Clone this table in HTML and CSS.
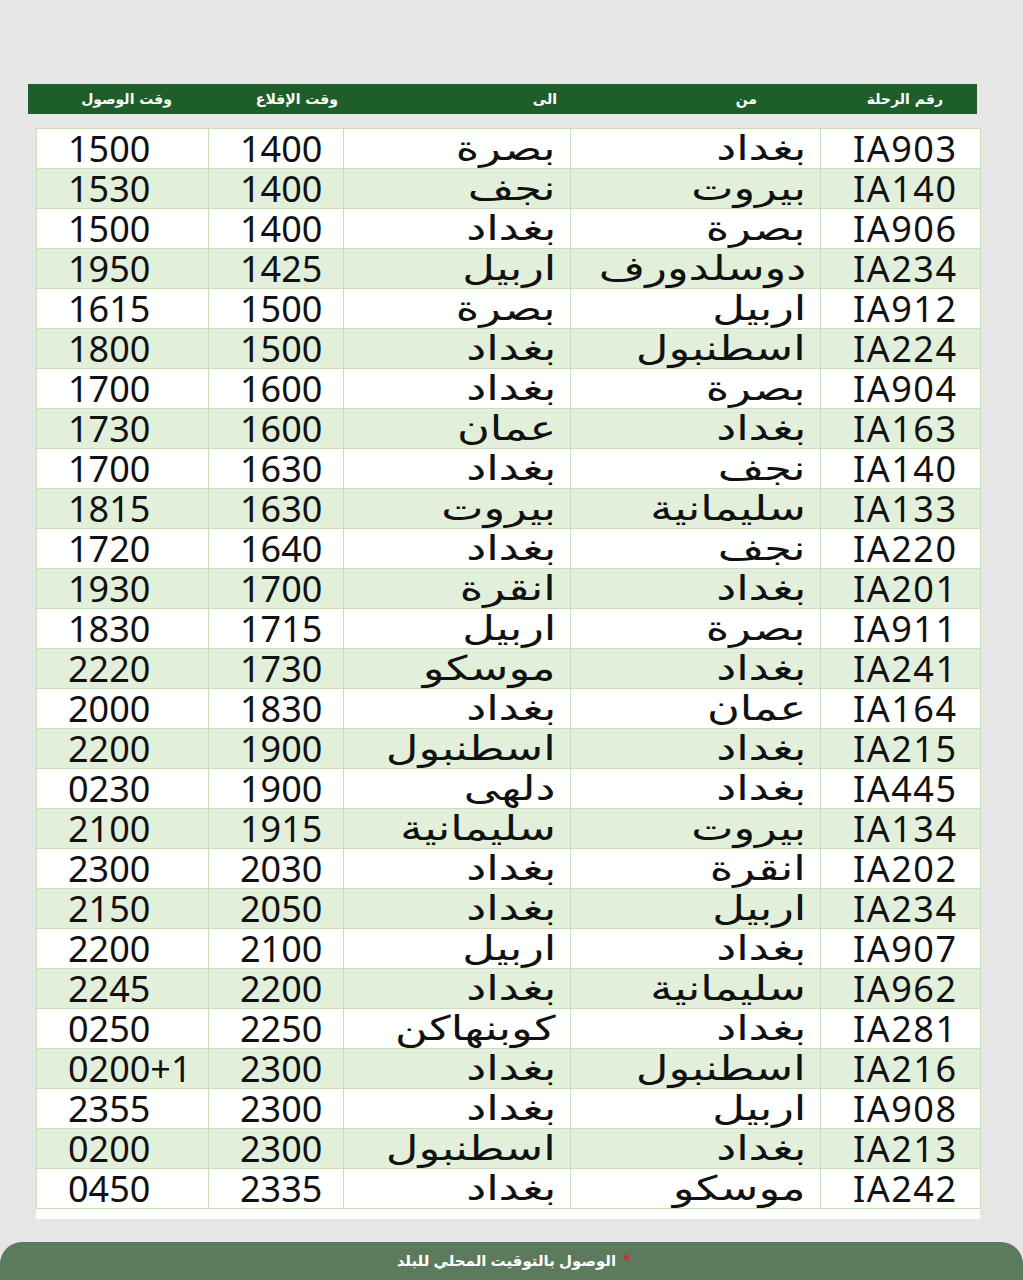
FILE: index.html
```html
<!DOCTYPE html>
<html lang="ar">
<head>
<meta charset="utf-8">
<link rel="stylesheet" href="styles.css">
</head>
<body>
<div class="page">
  <div class="head" dir="rtl">
    <span>رقم الرحلة</span>
    <span>من</span>
    <span>الى</span>
    <span>وقت الإقلاع</span>
    <span>وقت الوصول</span>
  </div>
  <div class="panel">
    <table class="sched" dir="rtl">
      <colgroup>
        <col class="c-fl"><col class="c-from"><col class="c-to"><col class="c-dep"><col class="c-arr">
      </colgroup>
      <tbody id="rows">
<tr><td class="fl">IA903</td><td class="city"><span>بغداد</span></td><td class="city"><span>بصرة</span></td><td class="tm">1400</td><td class="tm">1500</td></tr>
<tr><td class="fl">IA140</td><td class="city"><span>بيروت</span></td><td class="city"><span>نجف</span></td><td class="tm">1400</td><td class="tm">1530</td></tr>
<tr><td class="fl">IA906</td><td class="city"><span>بصرة</span></td><td class="city"><span>بغداد</span></td><td class="tm">1400</td><td class="tm">1500</td></tr>
<tr><td class="fl">IA234</td><td class="city"><span>دوسلدورف</span></td><td class="city"><span>اربيل</span></td><td class="tm">1425</td><td class="tm">1950</td></tr>
<tr><td class="fl">IA912</td><td class="city"><span>اربيل</span></td><td class="city"><span>بصرة</span></td><td class="tm">1500</td><td class="tm">1615</td></tr>
<tr><td class="fl">IA224</td><td class="city"><span>اسطنبول</span></td><td class="city"><span>بغداد</span></td><td class="tm">1500</td><td class="tm">1800</td></tr>
<tr><td class="fl">IA904</td><td class="city"><span>بصرة</span></td><td class="city"><span>بغداد</span></td><td class="tm">1600</td><td class="tm">1700</td></tr>
<tr><td class="fl">IA163</td><td class="city"><span>بغداد</span></td><td class="city"><span>عمان</span></td><td class="tm">1600</td><td class="tm">1730</td></tr>
<tr><td class="fl">IA140</td><td class="city"><span>نجف</span></td><td class="city"><span>بغداد</span></td><td class="tm">1630</td><td class="tm">1700</td></tr>
<tr><td class="fl">IA133</td><td class="city"><span>سليمانية</span></td><td class="city"><span>بيروت</span></td><td class="tm">1630</td><td class="tm">1815</td></tr>
<tr><td class="fl">IA220</td><td class="city"><span>نجف</span></td><td class="city"><span>بغداد</span></td><td class="tm">1640</td><td class="tm">1720</td></tr>
<tr><td class="fl">IA201</td><td class="city"><span>بغداد</span></td><td class="city"><span>انقرة</span></td><td class="tm">1700</td><td class="tm">1930</td></tr>
<tr><td class="fl">IA911</td><td class="city"><span>بصرة</span></td><td class="city"><span>اربيل</span></td><td class="tm">1715</td><td class="tm">1830</td></tr>
<tr><td class="fl">IA241</td><td class="city"><span>بغداد</span></td><td class="city"><span>موسكو</span></td><td class="tm">1730</td><td class="tm">2220</td></tr>
<tr><td class="fl">IA164</td><td class="city"><span>عمان</span></td><td class="city"><span>بغداد</span></td><td class="tm">1830</td><td class="tm">2000</td></tr>
<tr><td class="fl">IA215</td><td class="city"><span>بغداد</span></td><td class="city"><span>اسطنبول</span></td><td class="tm">1900</td><td class="tm">2200</td></tr>
<tr><td class="fl">IA445</td><td class="city"><span>بغداد</span></td><td class="city"><span>دلهى</span></td><td class="tm">1900</td><td class="tm">0230</td></tr>
<tr><td class="fl">IA134</td><td class="city"><span>بيروت</span></td><td class="city"><span>سليمانية</span></td><td class="tm">1915</td><td class="tm">2100</td></tr>
<tr><td class="fl">IA202</td><td class="city"><span>انقرة</span></td><td class="city"><span>بغداد</span></td><td class="tm">2030</td><td class="tm">2300</td></tr>
<tr><td class="fl">IA234</td><td class="city"><span>اربيل</span></td><td class="city"><span>بغداد</span></td><td class="tm">2050</td><td class="tm">2150</td></tr>
<tr><td class="fl">IA907</td><td class="city"><span>بغداد</span></td><td class="city"><span>اربيل</span></td><td class="tm">2100</td><td class="tm">2200</td></tr>
<tr><td class="fl">IA962</td><td class="city"><span>سليمانية</span></td><td class="city"><span>بغداد</span></td><td class="tm">2200</td><td class="tm">2245</td></tr>
<tr><td class="fl">IA281</td><td class="city"><span>بغداد</span></td><td class="city"><span>كوبنهاكن</span></td><td class="tm">2250</td><td class="tm">0250</td></tr>
<tr><td class="fl">IA216</td><td class="city"><span>اسطنبول</span></td><td class="city"><span>بغداد</span></td><td class="tm">2300</td><td class="tm" dir="ltr">0200+1</td></tr>
<tr><td class="fl">IA908</td><td class="city"><span>اربيل</span></td><td class="city"><span>بغداد</span></td><td class="tm">2300</td><td class="tm">2355</td></tr>
<tr><td class="fl">IA213</td><td class="city"><span>بغداد</span></td><td class="city"><span>اسطنبول</span></td><td class="tm">2300</td><td class="tm">0200</td></tr>
<tr><td class="fl">IA242</td><td class="city"><span>موسكو</span></td><td class="city"><span>بغداد</span></td><td class="tm">2335</td><td class="tm">0450</td></tr>
      </tbody>
    </table>
  </div>
  <div class="foot" dir="rtl">
    <span class="star">*</span>
    <span class="note">الوصول بالتوقيت المحلي للبلد</span>
  </div>
</div>
</body>
</html>
```
FILE: styles.css
```css
html, body {
  margin: 0;
  padding: 0;
  background: #e6e6e6;
}
.page {
  width: 1023px;
  height: 1280px;
  padding-top: 84px;
  box-sizing: border-box;
  display: flex;
  flex-direction: column;
  font-family: "Noto Sans", "DejaVu Sans", sans-serif;
}
.head {
  margin-left: 28px;
  width: 949px;
  height: 30px;
  box-sizing: border-box;
  background: #1e5e2a;
  color: #ffffff;
  display: grid;
  grid-template-columns: 186px 200px 219px 166px 1fr;
  padding-right: 34px;
  align-items: center;
  font-family: "DejaVu Sans", sans-serif;
  font-size: 14px;
  font-weight: bold;
  text-align: right;
}
.panel {
  margin-top: 14px;
  margin-left: 36px;
  width: 944px;
  background: #ffffff;
  padding-bottom: 10px;
}
.sched {
  border-collapse: collapse;
  table-layout: fixed;
  width: 944px;
}
.c-fl { width: 160px; }
.c-from { width: 250px; }
.c-to { width: 227px; }
.c-dep { width: 135px; }
.c-arr { width: 172px; }
.sched td {
  height: 39px;
  padding: 0;
  border: 1px solid #c9deba;
  font-size: 36px;
  line-height: 39px;
  color: #111111;
  white-space: nowrap;
}
.sched tr:nth-child(even) td {
  background: #e2efda;
}
.sched td.fl {
  text-align: left;
  padding-left: 32px;
  letter-spacing: 1.5px;
}
.sched td.city {
  text-align: right;
  padding-right: 14px;
  font-family: "DejaVu Sans", sans-serif;
  font-size: 34px;
}
.sched td.city span {
  display: inline-block;
  transform: scaleX(1.32);
  transform-origin: right center;
}
.sched td.tm {
  text-align: left;
  padding-left: 31px;
}
.foot {
  margin-top: auto;
  height: 38px;
  background: #5b7b5c;
  border-radius: 22px 22px 0 0;
  display: flex;
  justify-content: center;
  align-items: center;
  gap: 8px;
  padding-left: 4px;
  color: #ffffff;
  font-family: "Liberation Sans", "DejaVu Sans", sans-serif;
  font-weight: bold;
  font-size: 15px;
}
.star {
  color: #e0242b;
  font-size: 16px;
}
```
